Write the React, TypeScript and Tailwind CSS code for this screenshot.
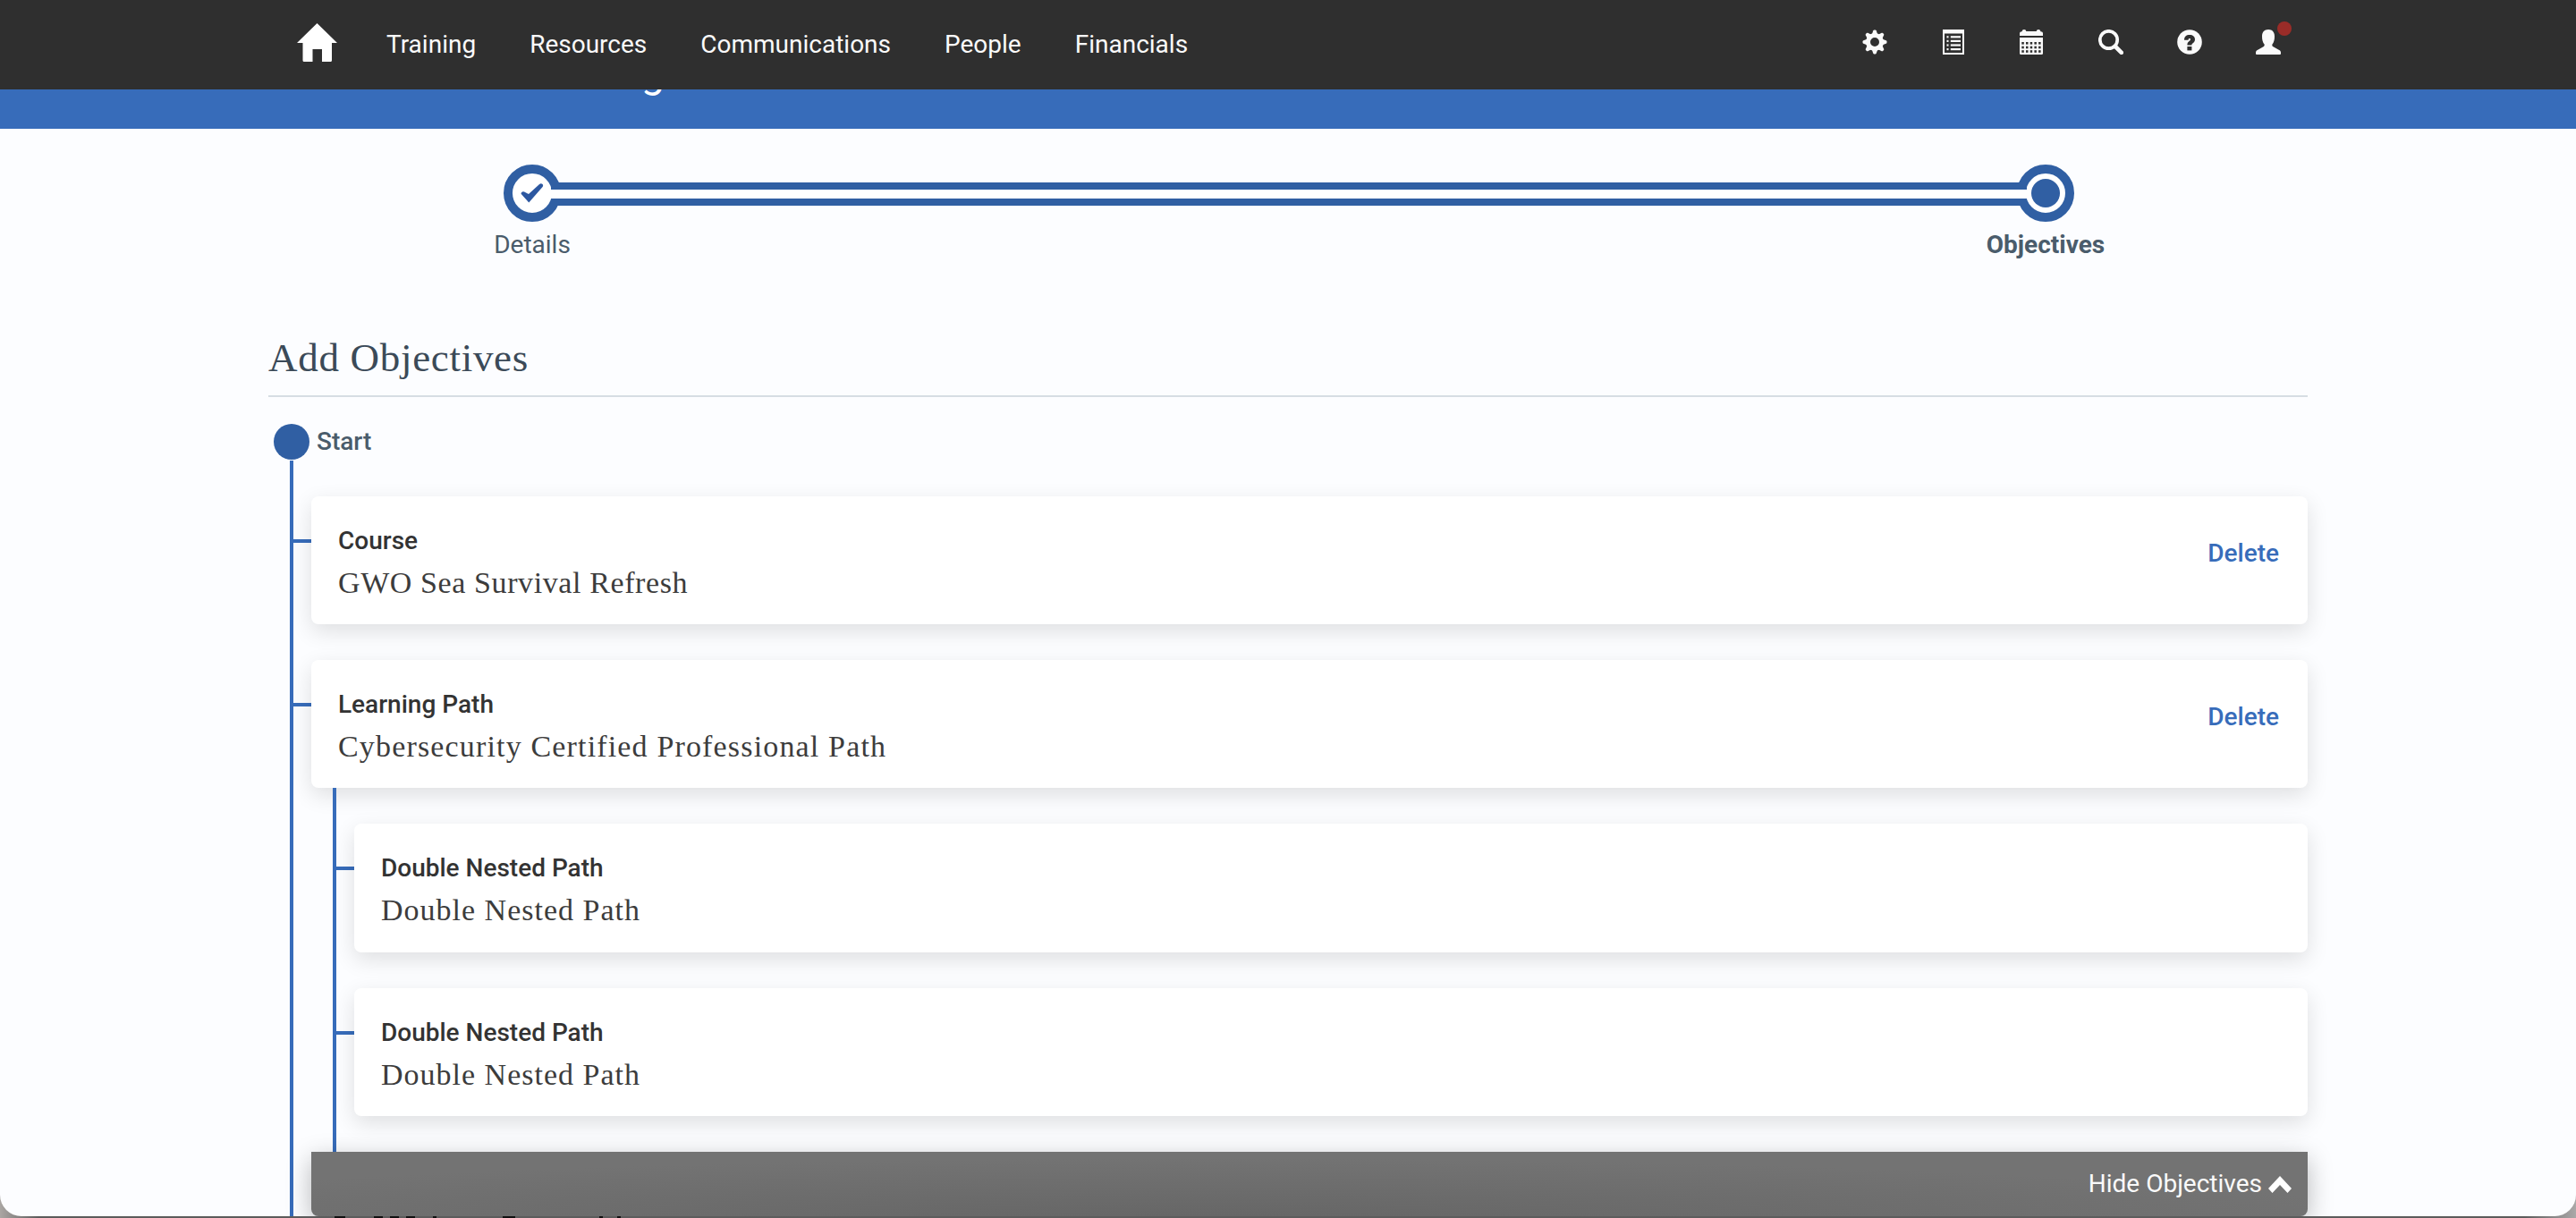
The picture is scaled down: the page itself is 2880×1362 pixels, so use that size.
import React from "react";

const navItems = ["Training", "Resources", "Communications", "People", "Financials"];

function HomeIcon() {
  return (
    <svg className="h-[43px] w-[45px]" viewBox="0 0 45 43" fill="#fff">
      <path d="M22.500 0 45 22h-6v19.500q0 1.500-1.500 1.500H28V29H17.500v14H8q-1.500 0-1.500-1.500V22H0Z" />
    </svg>
  );
}

function GearIcon() {
  const teeth = [0, 45, 90, 135, 180, 225, 270, 315];
  return (
    <svg className="h-7 w-7" viewBox="0 0 28 28">
      {teeth.map((a) => (
        <path key={a} d="M10.600 6 12.300 1.300q.3-.8 1.100-.8h1.200q.8 0 1.100.8L17.400 6Z" fill="#fafafa" transform={`rotate(${a} 14 14)`} />
      ))}
      <circle cx="14" cy="14" r="7.500" fill="none" stroke="#fafafa" strokeWidth="5" />
    </svg>
  );
}

function ListIcon() {
  return (
    <svg className="h-7 w-[26px]" viewBox="0 0 26 28" fill="#fafafa">
      <path fillRule="evenodd" d="M0 0h24v28H0ZM2 4.500v21.500h20V4.500Z" />
      {[7.2, 11.800, 16.400, 21].map((y) => (
        <g key={y}>
          <rect x="4.500" y={y} width="2" height="2.200" />
          <rect x="8.800" y={y} width="11.200" height="2.200" />
        </g>
      ))}
    </svg>
  );
}

function CalendarIcon() {
  return (
    <svg className="h-7 w-[26px]" viewBox="0 0 26 28" fill="#fafafa">
      <path d="M0 7V4q0-1.500 2.500-1.700Q2.800 0 5 0t2.300 2h11.400Q19 0 21 0t2.500 2.300Q26 2.500 26 4v3Z" />
      <path d="M0 9h26v17.500q0 1.500-1.500 1.500h-23Q0 28 0 26.500Z" />
      {[14, 18.700, 23.200].map((y) =>
        [2.300, 7, 11.700, 16.400, 21.100].map((x) => (
          <rect key={`${x}-${y}`} x={x} y={y} width="2.500" height="2.600" fill="#2f2f2f" />
        ))
      )}
    </svg>
  );
}

function SearchIcon() {
  return (
    <svg className="h-7 w-7" viewBox="0 0 28 28" fill="none" stroke="#fafafa">
      <circle cx="11.500" cy="11.500" r="9.700" strokeWidth="3.700" />
      <path d="m19 19 6.800 6.800" strokeWidth="4.600" strokeLinecap="round" />
    </svg>
  );
}

function HelpIcon() {
  return (
    <svg className="h-7 w-7" viewBox="0 0 28 28">
      <circle cx="14" cy="14" r="13.800" fill="#fafafa" />
      <path d="M8 11.700C8 8 10.200 6 14 6c3.600 0 6 2 6 5 0 2.300-1.200 3.500-2.600 4.500-.9.700-1 1-1 2h-5c0-2.300.6-3.300 2.200-4.500 1-.8 1.400-1.200 1.400-2 0-.7-.5-1-1.200-1-.8 0-1.200.6-1.200 1.700Z" fill="#2f2f2f" />
      <rect x="11.400" y="19" width="5" height="4.400" fill="#2f2f2f" />
    </svg>
  );
}

function UserIcon() {
  return (
    <svg className="h-7 w-7" viewBox="0 0 28 28" fill="#fafafa">
      <path d="M14 0c4.600 0 7 3 7 7.800 0 3.700-.8 6.700-2.700 9 0 1.500.2 2 1.700 2.700l6.200 3.400c1.300.8 1.800 1.500 1.800 3V27q0 1-1 1H1q-1 0-1-1v-1.100c0-1.500.5-2.200 1.800-3L8 19.500c1.500-.8 1.700-1.200 1.700-2.700-1.900-2.300-2.700-5.300-2.700-9C7 3 9.400 0 14 0Z" />
    </svg>
  );
}

function CheckIcon() {
  return (
    <svg className="h-[22px] w-[26px]" viewBox="0 0 26 22">
      <path d="M1 12.200q-.9-1 .1-2l.8-.6q1-.8 2.200-.1L9 12 20.800 1.200q2-1.700 3.500-.4t.3 3.200L9.300 21.500Z" fill="#2c57a0" />
    </svg>
  );
}

function ChevronUpIcon() {
  return (
    <svg className="h-[19px] w-[26px]" viewBox="0 0 26 19" fill="#fff">
      <path d="M13 0 26 14 21.500 19 13 10 4.500 19 0 14Z" />
    </svg>
  );
}

interface ObjectiveProps {
  kind: string;
  title: string;
  titleSpacing: string;
  removable?: boolean;
}

function Objective({ kind, title, titleSpacing, removable }: ObjectiveProps) {
  return (
    <div className="flex h-[143.300px]">
      <div className="mt-12 h-1 w-5 shrink-0 bg-[#376cba]" />
      <div className="flex flex-1 justify-between rounded-lg bg-white pl-[30px] pr-8 shadow-[0_8px_24px_rgba(0,0,0,0.12)]">
        <div className="text-[#333]">
          <div className="mt-[34px] text-[28px] font-medium leading-8">{kind}</div>
          <div className={`mt-[11px] whitespace-nowrap font-['Roboto_Slab','Liberation_Serif',serif] text-[34px] font-light leading-10 text-[#3c3c3c] ${titleSpacing}`}>{title}</div>
        </div>
        {removable && <div className="mt-12 text-[28px] font-medium leading-8 text-[#376cba]">Delete</div>}
      </div>
    </div>
  );
}

export default function App() {
  return (
    <div className="h-[1362px] w-[2880px] overflow-hidden bg-[linear-gradient(90deg,#aaa6a3,#5c5c5c_1.500%,#5c5c5c_98%,#aaa8a8)] font-['Roboto',sans-serif]">
      <div className="h-[1360px] overflow-hidden rounded-b-[24px] bg-[#fcfdff]">
        <header className="flex h-[100px] items-start bg-[#2f2f2f] pl-[332px] text-[#fafafa]">
          <div className="mt-[26px] w-[45px]">
            <HomeIcon />
          </div>
          <nav className="ml-[55px] mt-[34px] flex gap-[60px] text-[28px] leading-8">
            {navItems.map((n) => (
              <span key={n}>{n}</span>
            ))}
          </nav>
          <div className="ml-auto mr-[330px] mt-[33px] flex">
            <div className="mr-[62px]"><GearIcon /></div>
            <div className="mr-[60px]"><ListIcon /></div>
            <div className="mr-[62px]"><CalendarIcon /></div>
            <div className="mr-[60px]"><SearchIcon /></div>
            <div className="mr-[60px]"><HelpIcon /></div>
            <div className="relative">
              <UserIcon />
              <span className="absolute -top-[9px] left-6 h-4 w-4 rounded-full bg-[#9a2c28]" />
            </div>
          </div>
        </header>
        <div className="h-11 overflow-hidden bg-[#376cba] pl-[717px]">
          <div className="-mt-[48px] text-[46px] leading-[60px] text-white">g</div>
        </div>

        <section className="flex items-start justify-center pl-[563px] pr-[561px] pt-10">
          <div className="flex w-16 shrink-0 flex-col items-center">
            <div className="flex h-16 w-16 items-center justify-center rounded-full border-[10px] border-[#305fa3] bg-white">
              <CheckIcon />
            </div>
            <div className="mt-[10px] text-[28px] leading-8 text-[#4a5c6b]">Details</div>
          </div>
          <div className="z-10 -mx-[11px] mt-5 h-[26px] flex-1 border-y-8 border-[#305fa3] bg-white" />
          <div className="flex w-16 shrink-0 flex-col items-center">
            <div className="flex h-16 w-16 items-center justify-center rounded-full border-[10px] border-[#305fa3] bg-white">
              <div className="h-8 w-8 rounded-full bg-[#305fa3]" />
            </div>
            <div className="mt-[10px] text-[28px] font-bold leading-8 text-[#4a5c6b]">Objectives</div>
          </div>
        </section>

        <main className="ml-[300px] w-[2280px]">
          <h1 className="mt-[80px] h-[74px] border-b-2 border-[#d6dde3] font-['Roboto_Slab','Liberation_Serif',serif] text-[45px] font-light leading-[60px] tracking-[0.700px] text-[#3b4a58]">
            Add Objectives
          </h1>
          <div className="mt-[30px] flex h-10 items-center">
            <div className="ml-1.5 h-10 w-10 rounded-full bg-[#305fa3]" />
            <div className="ml-2 text-[28px] font-medium leading-8 text-[#4a5c6b]">Start</div>
          </div>
          <div className="ml-6 mt-px flex h-[860px]">
            <div className="w-1 shrink-0 bg-[#376cba]" />
            <div className="flex flex-1 flex-col pt-[39.800px]">
              <div className="flex flex-col gap-10">
                <Objective kind="Course" title="GWO Sea Survival Refresh" titleSpacing="tracking-[0.600px]" removable />
                <Objective kind="Learning Path" title="Cybersecurity Certified Professional Path" titleSpacing="tracking-[1.160px]" removable />
              </div>
              <div className="z-10 ml-11 flex h-[407px]">
                <div className="w-1 shrink-0 bg-[#376cba]" />
                <div className="flex flex-1 flex-col gap-10 pt-10">
                  <Objective kind="Double Nested Path" title="Double Nested Path" titleSpacing="tracking-[1px]" />
                  <Objective kind="Double Nested Path" title="Double Nested Path" titleSpacing="tracking-[1px]" />
                </div>
              </div>
              <div className="z-20 ml-5 flex h-[72px] shrink-0 items-start rounded-b-lg bg-[#737373] bg-[radial-gradient(ellipse_60%_100%_at_45%_110%,#656565,#737373)] pr-[18px] shadow-[0_8px_28px_rgba(0,0,0,0.28)]">
                <div className="ml-auto mt-[20px] text-[28px] leading-8 text-[#fafafa]">Hide Objectives</div>
                <div className="ml-[7px] mt-[27px]"><ChevronUpIcon /></div>
              </div>
            </div>
          </div>
        </main>
      </div>
      <div className="flex h-0.5 pl-[374px]">
        <span className="w-3 bg-[#111]" />
        <span className="ml-8 w-2.5 bg-[#111]" />
        <span className="ml-2 w-2.5 bg-[#111]" />
        <span className="ml-2 w-2.5 bg-[#111]" />
        <span className="ml-5 w-1 bg-[#111]" />
        <span className="ml-[74px] w-3.5 bg-[#111]" />
        <span className="ml-[94px] w-1 bg-[#111]" />
        <span className="ml-4 w-1 bg-[#111]" />
      </div>
    </div>
  );
}
